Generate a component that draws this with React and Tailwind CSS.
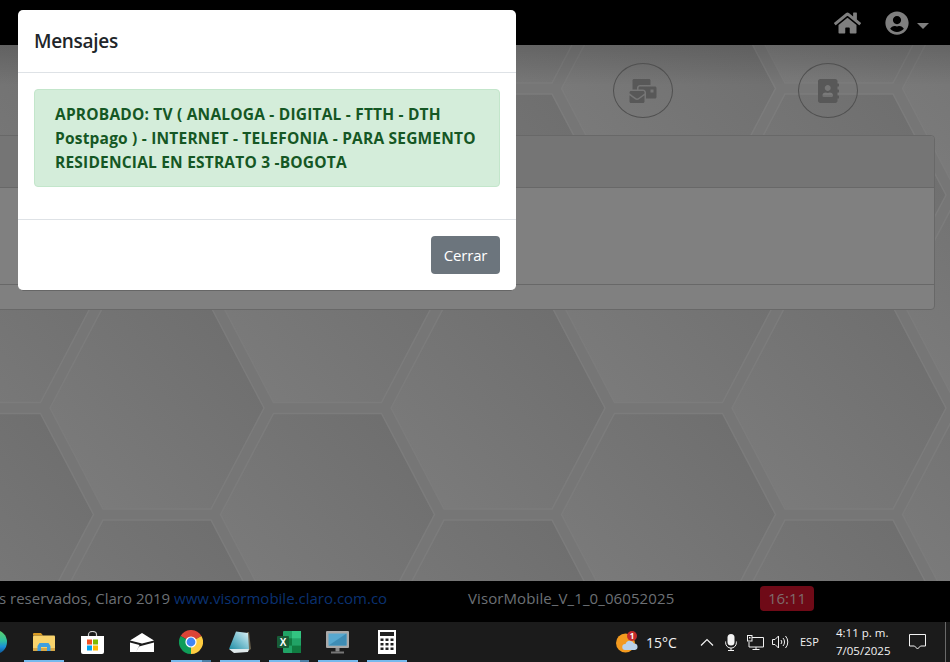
import { FaHome, FaUserCircle, FaMailBulk, FaAddressBook } from "react-icons/fa";

const hexagons = [];
for (let k = -2; k < 7; k++) {
    for (let n = -1; n < 4; n++) {
        const cx = 157 + k * 170.5;
        const cy = 408 - 45 - n * 213 + (k % 2 !== 0 ? 106.5 : 0);
        hexagons.push(`${cx - 107},${cy} ${cx - 54},${cy - 101} ${cx + 54},${cy - 101} ${cx + 107},${cy} ${cx + 54},${cy + 101} ${cx - 54},${cy + 101}`);
    }
}

const HexBackground = () => (
    <svg className="absolute inset-0 w-full h-full" width="950" height="536">
        <defs>
            <linearGradient id="hexFill" x1="0.1" y1="0.9" x2="0.9" y2="0.2">
                <stop offset="0" stopColor="#7b7b7b" />
                <stop offset="1" stopColor="#6f6f6f" />
            </linearGradient>
        </defs>
        <rect width="950" height="536" fill="#767676" />
        {hexagons.map((points, idx) => (
            <polygon key={idx} points={points} fill="url(#hexFill)" stroke="#7c7c7c" strokeWidth="1.5" />
        ))}
    </svg>
);

const FolderIcon = () => (
    <svg width="22" height="18" viewBox="0 0 22 18">
        <path d="M0 1a1 1 0 0 1 1-1h7l2 2.500h-10z" fill="#d99a22" />
        <rect y="2.500" width="22" height="15.500" rx="1" fill="#f8d36c" />
        <path d="M0 15h22v2a1 1 0 0 1-1 1H1a1 1 0 0 1-1-1z" fill="#d9a845" />
        <path d="M4.500 18v-5l2-3h9l2 3v5h-3.500v-4h-6v4z" fill="#3f9fe0" />
    </svg>
);

const StoreIcon = () => (
    <svg width="23" height="23" viewBox="0 0 23 23">
        <path d="M7.500 6V3.500a4 3 0 0 1 8 0V6" fill="none" stroke="#cfcfcf" strokeWidth="1.200" />
        <path d="M0 5h23v16a2 2 0 0 1-2 2H2a2 2 0 0 1-2-2z" fill="#fff" />
        <rect x="6" y="8.500" width="5" height="5" fill="#f25022" />
        <rect x="12" y="8.500" width="5" height="5" fill="#7fba00" />
        <rect x="6" y="14.500" width="5" height="5" fill="#00a4ef" />
        <rect x="12" y="14.500" width="5" height="5" fill="#ffb900" />
    </svg>
);

const MailIcon = () => (
    <svg width="24" height="19" viewBox="0 0 24 19">
        <path d="M0 7.500 12 0l12 7.500-12 3z" fill="#fff" />
        <path d="M0 9.500 9.500 12 6 19H24V9.500L9 13.500 6 19H0z" fill="#fff" />
    </svg>
);

const ChromeIcon = () => (
    <svg width="24" height="24" viewBox="0 0 24 24">
        <path d="M12 12 1.600 6A12 12 0 0 1 22.400 6z" fill="#db4437" />
        <path d="M12 12 1.600 6A12 12 0 0 0 12 24z" fill="#0f9d58" />
        <path d="M12 12 22.400 6A12 12 0 0 1 12 24z" fill="#ffcd40" />
        <circle cx="12" cy="12" r="5.600" fill="#fff" />
        <circle cx="12" cy="12" r="4.400" fill="#4285f4" />
    </svg>
);

const NotesIcon = () => (
    <svg width="22" height="22" viewBox="0 0 22 22">
        <defs>
            <linearGradient id="notesFill" x1="0" y1="1" x2="1" y2="0">
                <stop offset="0" stopColor="#1f8ea6" />
                <stop offset="0.6" stopColor="#8fcbd8" />
                <stop offset="1" stopColor="#e2f2f5" />
            </linearGradient>
        </defs>
        <path d="M18 1h2l2 17-3 2z" fill="#6d6450" />
        <path d="M7 0.500 19 2l1 16H0z" fill="url(#notesFill)" />
        <path d="M0 18h20l-1 3-14 1z" fill="#dfe9eb" />
    </svg>
);

const ExcelIcon = () => (
    <svg width="24" height="22" viewBox="0 0 24 22">
        <rect x="6" width="18" height="22" rx="1" fill="#21a366" />
        <rect x="15" width="9" height="7.300" fill="#33c481" />
        <rect x="6" y="7.300" width="9" height="7.300" fill="#107c41" />
        <rect x="15" y="14.600" width="9" height="7.400" fill="#107c41" />
        <rect y="5" width="12" height="12" rx="1" fill="#185c37" />
        <text x="6" y="14.500" textAnchor="middle" fontSize="10" fontWeight="700" fontFamily="Liberation Sans, sans-serif" fill="#fff">X</text>
    </svg>
);

const MonitorIcon = () => (
    <svg width="23" height="23" viewBox="0 0 23 23">
        <rect width="23" height="17" rx="1" fill="#a9a9a9" />
        <rect x="2.500" y="2.500" width="18" height="12" fill="#57a8cf" />
        <path d="M2.500 14.500 20.500 2.500v12z" fill="#3f8db5" />
        <rect x="9.500" y="17" width="4" height="3.500" fill="#8b8b8b" />
        <rect x="5" y="20.500" width="13" height="2" fill="#777" />
    </svg>
);

const CalcIcon = () => (
    <svg width="18" height="24" viewBox="0 0 18 24">
        <rect width="18" height="24" fill="#fff" />
        <rect x="2" y="2" width="14" height="4" fill="#222" />
        {[8.500, 13, 17.500].map((y) => [2.500, 7.500, 12.500].map((x) => (
            <rect key={`${x}-${y}`} x={x} y={y} width="3" height="2.500" fill="#222" />
        )))}
    </svg>
);

const taskbarApps = [
    { icon: <FolderIcon />, line: true },
    { icon: <StoreIcon /> },
    { icon: <MailIcon /> },
    { icon: <ChromeIcon />, line: true, stacked: true },
    { icon: <NotesIcon />, line: true },
    { icon: <ExcelIcon />, line: true, stacked: true },
    { icon: <MonitorIcon />, line: true },
    { icon: <CalcIcon />, line: true },
];

const WeatherIcon = () => (
    <svg width="23" height="22" viewBox="0 0 23 22">
        <circle cx="9.500" cy="12" r="9.500" fill="#f39a1f" />
        <path d="M9 19a3 3 0 0 1 .5-6 4.500 4.500 0 0 1 8.500-.5 3.300 3.300 0 0 1 1 6.500z" fill="#b9d2ea" />
        <circle cx="16" cy="5" r="5" fill="#c42b2b" />
        <text x="16" y="8" textAnchor="middle" fontSize="8" fontWeight="700" fontFamily="Open Sans, sans-serif" fill="#fff">1</text>
    </svg>
);

const MicIcon = () => (
    <svg width="12" height="17" viewBox="0 0 12 17">
        <rect x="2.500" y="0" width="7" height="11.500" rx="3.500" fill="#f2f2f2" />
        <path d="M.6 7.500v1.200a5.400 5.400 0 0 0 10.800 0V7.500M6 14v2.500M3 16.500h6" fill="none" stroke="#f2f2f2" strokeWidth="1" />
    </svg>
);

const NetworkIcon = () => (
    <svg width="17" height="15" viewBox="0 0 17 15" fill="none" stroke="#f2f2f2" strokeWidth="1">
        <path d="M5 2.500h11.500v9.500H2V7" />
        <rect x=".5" y=".5" width="4.500" height="5.500" />
        <rect x="2" y="2" width="1.500" height="1.500" fill="#f2f2f2" stroke="none" />
        <path d="M9 12v2.500M5.500 14.500h7" />
    </svg>
);

const SpeakerIcon = () => (
    <svg width="17" height="14" viewBox="0 0 17 14" fill="none" stroke="#f2f2f2" strokeWidth="1">
        <path d="M.5 4.500h2.500L6.500 1v12L3 9.500H.5z" />
        <path d="M9 5a3 3 0 0 1 0 4M11 3a6 6 0 0 1 0 8M13.500 1a9 9 0 0 1 0 12" />
    </svg>
);

const NotificationIcon = () => (
    <svg width="17" height="16" viewBox="0 0 17 16" fill="none" stroke="#f2f2f2" strokeWidth="1">
        <path d="M.5.500h16v11.500h-5l-3 3-3-3h-5z" />
    </svg>
);

export default function App() {
    return (
        <div className="relative w-[950px] h-[662px] overflow-hidden flex flex-col bg-black font-['Open_Sans',sans-serif]">
            <div className="h-[45px] bg-black flex items-center justify-end pr-[21px] text-[#7f7f7f]">
                <FaHome className="w-[27px] h-[24px] mr-[24px]" />
                <FaUserCircle className="w-[24px] h-[24px] mr-[8px]" />
                <div className="mt-[6px] border-x-[6px] border-t-[6px] border-x-transparent border-t-[#7f7f7f]" />
            </div>

            <div className="relative flex-1">
                <HexBackground />
                <div className="absolute inset-x-0 top-0 h-[40px] bg-gradient-to-b from-black/15 to-transparent" />
                <div className="relative pt-[18px]">
                    <div className="flex justify-end gap-[125px] pr-[92px]">
                        <div className="w-[60px] h-[55px] rounded-[50%] border border-[#505050] flex items-center justify-center text-[#585858]">
                            <FaMailBulk className="w-[28px] h-[24px]" />
                        </div>
                        <div className="w-[60px] h-[55px] rounded-[50%] border border-[#505050] flex items-center justify-center text-[#585858]">
                            <FaAddressBook className="w-[21px] h-[24px]" />
                        </div>
                    </div>
                    <div className="mt-[17px] -ml-[20px] mr-[15px] h-[175px] border border-[#686868] rounded-[4px] flex flex-col bg-[#808080]">
                        <div className="h-[52px] bg-[#757575] border-b border-[#686868] rounded-t-[4px]" />
                        <div className="h-[97px] border-b border-[#686868]" />
                    </div>
                </div>
            </div>

            <div className="h-[41px] bg-black flex items-center text-[15px] leading-none whitespace-nowrap text-[#6c7075]">
                <span className="-ml-[1px] w-[469px] -mt-[7px]">
                    s reservados, Claro 2019 <span className="text-[#0a3272]">www.visormobile.claro.com.co</span>
                </span>
                <span className="w-[292px] tracking-[0.1px] -mt-[7px]">VisorMobile_V_1_0_06052025</span>
                <span className="w-[54px] h-[25px] -mt-[7px] rounded-[4px] bg-[#6f0a17] text-[#7e6a6c] flex items-center justify-center">16:11</span>
            </div>

            <div className="h-[40px] bg-[#1b1b1b] flex items-center text-[#f2f2f2] whitespace-nowrap relative">
                <div className="flex -ml-[30px] h-full">
                    <div className="w-[49px] flex items-center justify-center">
                        <div className="w-[24px] h-[24px] rounded-full bg-[linear-gradient(180deg,#5fd06a_0%,#2fc0a0_45%,#1b8fd8_70%,#0b4f8c_100%)]" />
                    </div>
                    {taskbarApps.map((app, idx) => (
                        <div key={idx} className="relative w-[49px] h-full flex items-center justify-center">
                            {app.icon}
                            {app.line && (
                                <div className="absolute bottom-0 left-[4.500px] w-[40px] h-[2px] bg-[#76b9ed] flex justify-end">
                                    {app.stacked && <div className="w-[9px] h-full bg-[#4c7fa6]" />}
                                </div>
                            )}
                        </div>
                    ))}
                </div>
                <div className="ml-[205px] flex items-center">
                    <WeatherIcon />
                    <span className="ml-[7px] text-[14px] w-[54px]">15°C</span>
                    <svg width="14" height="8" viewBox="0 0 14 8" fill="none" stroke="#f2f2f2" strokeWidth="1.200"><path d="M1 7.500 7 1.500l6 6" /></svg>
                    <div className="ml-[11px]"><MicIcon /></div>
                    <div className="ml-[10px]"><NetworkIcon /></div>
                    <div className="ml-[8px]"><SpeakerIcon /></div>
                    <span className="ml-[11px] text-[11px] w-[36px]">ESP</span>
                    <div className="w-[52px] text-center text-[11.500px] leading-[18px]">
                        <div>4:11 p. m.</div>
                        <div>7/05/2025</div>
                    </div>
                    <div className="ml-[21px]"><NotificationIcon /></div>
                </div>
                <div className="absolute right-[4px] top-0 w-px h-full bg-[#6a6a6a]" />
            </div>

            {/* modal */}
            <div className="absolute left-[18px] top-[10px] w-[498px] h-[281px] bg-white rounded-[5px] border-b border-[#666] flex flex-col">
                <div className="h-[63px] px-[16px] border-b border-[#dee2e6] flex items-center">
                    <h5 className="text-[19px] font-semibold tracking-[-0.3px] text-[#212529] mt-[1px]">Mensajes</h5>
                </div>
                <div className="h-[146px] p-[16px]">
                    <div className="h-[98px] rounded-[4px] border border-[#c3e6cb] bg-[#d4edda] pl-[20px] pr-[12px] pt-[12px] text-[15.500px] leading-[24px] font-bold text-[#155724] tracking-[0.2px]">
                        APROBADO: TV ( ANALOGA - DIGITAL - FTTH - DTH Postpago ) - INTERNET - TELEFONIA - PARA SEGMENTO RESIDENCIAL EN ESTRATO 3 -BOGOTA
                    </div>
                </div>
                <div className="flex-1 border-t border-[#dee2e6] flex items-start justify-end pt-[16px] pr-[16px]">
                    <button className="w-[69px] h-[38px] rounded-[4px] bg-[#6c757d] text-white text-[15px] tracking-[-0.2px]">Cerrar</button>
                </div>
            </div>
        </div>
    );
}
